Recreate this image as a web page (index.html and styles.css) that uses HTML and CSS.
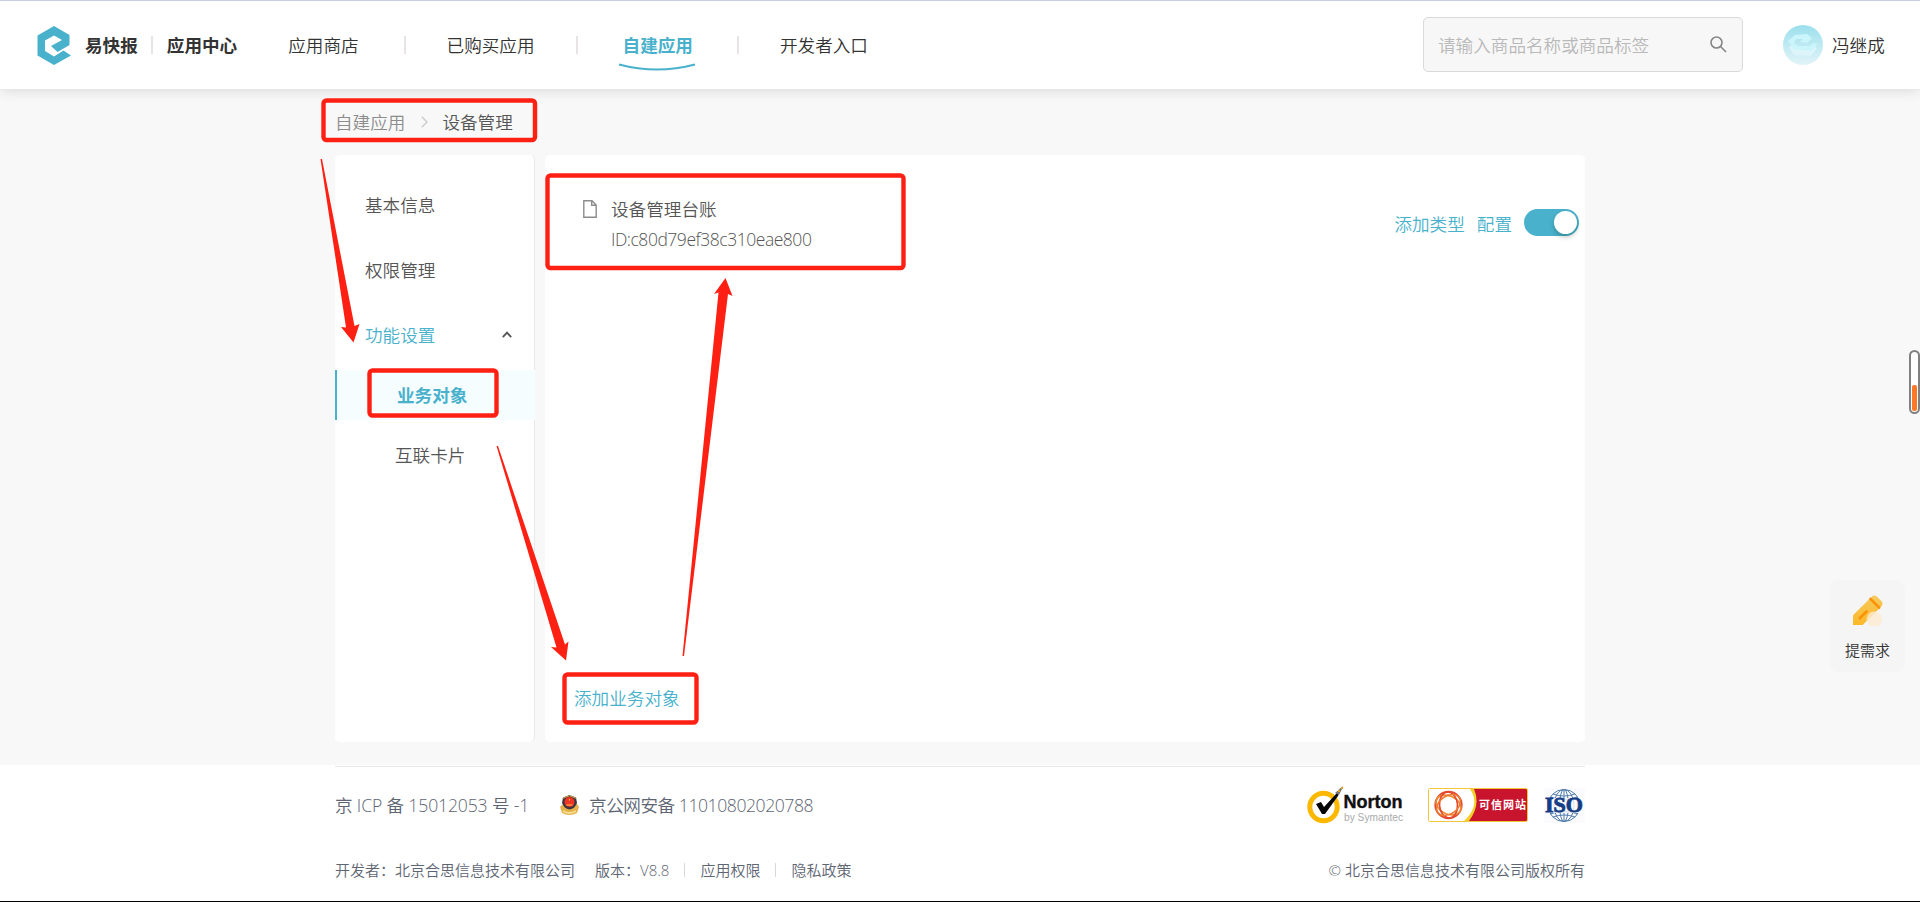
FILE: index.html
```html
<!DOCTYPE html>
<html lang="zh-CN">
<head>
<meta charset="utf-8">
<title>易快报 应用中心</title>
<link rel="stylesheet" href="styles.css">
</head>
<body>
<header class="topbar">
  <svg class="logo" viewBox="0 0 34 39"><path fill="#49b1cc" d="M17 0 32.500 9V19L20.500 26 14 20 25 14 17 9.500 8 14.500V25L17 30.500 26.500 24.500 34 29.500 17 39 .500 29.500V9.500Z"/></svg>
  <strong class="brand">易快报</strong>
  <i class="sep"></i>
  <strong class="center-name">应用中心</strong>
  <nav class="nav">
    <a>应用商店</a><i class="sep"></i><a>已购买应用</a><i class="sep"></i>
    <a class="current">自建应用<svg class="swoosh" viewBox="0 0 78 8"><path d="M1 1.500Q39 11.500 77 1.500" fill="none" stroke="#49b1cc" stroke-width="2"/></svg></a><i class="sep"></i><a>开发者入口</a>
  </nav>
  <div class="search"><span>请输入商品名称或商品标签</span>
    <svg class="lens" viewBox="0 0 17 17" fill="none" stroke="#858585" stroke-width="1.600"><circle cx="6.500" cy="6.500" r="5.500"/><path d="M10.500 10.500 16 16"/></svg>
  </div>
  <div class="user">
    <svg class="avatar" viewBox="0 0 40 40"><defs><linearGradient id="sky" x2="0" y2="1"><stop stop-color="#9adfec"/><stop offset="1" stop-color="#e2f4f8"/></linearGradient></defs><circle cx="20" cy="20" r="20" fill="url(#sky)"/><path d="M6 22 9 20 12 24 26 25 31 21 34 23 28 31 11 30Z" fill="#dff6fa" opacity=".85"/><path d="M5 16 12 10 24 9 29 13 24 18 17 17 20 14 13 14 11 18 15 21 27 21 30 18 35 19 28 26 11 24Z" fill="#c9f5fb"/></svg>
    <span>冯继成</span>
  </div>
</header>

<main class="page">
  <div class="crumbs"><span class="crumb-parent">自建应用</span><svg class="crumb-arrow" viewBox="0 0 7 12"><path d="M.8.8 6 6 .8 11.200" fill="none" stroke="#c9c9c9" stroke-width="1.300"/></svg><span>设备管理</span></div>
  <div class="columns">
    <aside class="side">
      <a class="item">基本信息</a>
      <a class="item">权限管理</a>
      <a class="item open">功能设置<svg class="chev" viewBox="0 0 10 7"><path d="M.8 6.200 5 1.600 9.200 6.200" fill="none" stroke="#555" stroke-width="1.800"/></svg></a>
      <a class="sub active">业务对象</a>
      <a class="sub">互联卡片</a>
    </aside>
    <section class="panel">
      <div class="record">
        <svg class="doc" viewBox="0 0 14 18" fill="none" stroke="#8c8c8c" stroke-width="1.400"><path d="M.8.8H9L13.200 5V17.200H.8ZM8.700.8V5.200H13.200"/></svg>
        <div class="record-text"><div>设备管理台账</div><div class="latin">ID:c80d79ef38c310eae800</div></div>
        <div class="actions"><a>添加类型</a><a>配置</a><span class="toggle"><i></i></span></div>
      </div>
      <a class="add">添加业务对象</a>
    </section>
  </div>
</main>

<footer class="footer">
  <div class="foot-inner">
    <div class="foot-row licenses">
      <span class="icp">京 ICP 备 15012053 号 -1</span>
      <svg class="police" viewBox="0 0 19 20"><path d="M2 10 0 12 2 18Q9.500 22 17 18L19 12 17 9Z" fill="#e4b14b"/><path d="M3 16Q9.500 20 16 16" fill="none" stroke="#f8df93" stroke-width="2"/><path d="M9.500 0 16 2.500 17 8Q15 13.500 9.500 14.500 4 13.500 2 8L3 2.500Z" fill="#3d3440"/><path d="M2.500 3.500 9.500.700 16.500 3.500" fill="none" stroke="#dfab4e"/><circle cx="9.500" cy="7" r="5" fill="#ee3423"/><path d="M6.500 10H12.500M9.500 4V5.500" stroke="#ffc446" stroke-width="1"/></svg>
      <span class="gongan">京公网安备 11010802020788</span>
      <div class="seals">
        <svg class="norton" viewBox="0 0 98 38"><circle cx="16.500" cy="21" r="13.700" fill="none" stroke="#fbb800" stroke-width="5"/><path d="M9 18 14 16 17 21 29 8 34 2 31 10 18 28H15Z" fill="#050505"/><path d="M28 7 36 0 35 3 32 9Z" fill="#777"/><path d="M31 4h2v2h-2zM34 1h2v2h-2z" fill="#e2a21c"/><text x="36.500" y="22" class="norton-name" textLength="59" lengthAdjust="spacingAndGlyphs">Norton</text><text x="37" y="34.500" class="norton-by" textLength="59" lengthAdjust="spacingAndGlyphs">by Symantec</text></svg>
        <svg class="trust" viewBox="0 0 100 34"><rect x=".5" y=".5" width="99" height="33" rx="1" fill="#fff" stroke="#f4c63b"/><path d="M42 1Q53 17 36 33H43Q54 17 46 1Z" fill="#f6cf29"/><path d="M46 1H98Q99 1 99 2V32Q99 33 98 33H41Q53 17 46 1Z" fill="#c8152d"/><g fill="none" stroke="#e2492e" stroke-width="1.700"><circle cx="20.500" cy="17" r="13.300"/><ellipse cx="20.500" cy="17" rx="13" ry="9" transform="rotate(25 20.500 17)" stroke="#f08b34"/><ellipse cx="20.500" cy="17" rx="13" ry="9" transform="rotate(85 20.500 17)"/><ellipse cx="20.500" cy="17" rx="13" ry="9" transform="rotate(145 20.500 17)" stroke="#ef7931"/></g><circle cx="20.500" cy="17" r="7" fill="#fff"/><text x="51" y="21" class="trust-name" textLength="47">可信网站</text></svg>
        <svg class="iso" viewBox="0 0 41 35"><rect width="41" height="35" fill="#fbfbfd"/><g fill="none" stroke="#527eac" stroke-width="1"><circle cx="20" cy="17.500" r="16"/><ellipse cx="20" cy="17.500" rx="10" ry="16"/><ellipse cx="20" cy="17.500" rx="4.500" ry="16"/><path d="M20 1V34M9 6Q20 10 31 6M6 9Q20 14 34 9M6 26Q20 21 34 26M9 29Q20 25 31 29"/></g><path d="M2 10H38V25H2Z" fill="#fbfbfd" opacity=".8"/><text x="1" y="24" class="iso-name" textLength="38" lengthAdjust="spacingAndGlyphs">ISO</text></svg>
      </div>
    </div>
    <div class="foot-row legal">
      <span class="dev">开发者：北京合思信息技术有限公司</span><span class="ver">版本：V8.8</span><i></i><span>应用权限</span><i></i><span>隐私政策</span><span class="copy">© 北京合思信息技术有限公司版权所有</span>
    </div>
  </div>
</footer>

<div class="gauge"><i></i></div>
<div class="request">
  <svg class="pen" viewBox="0 0 32 32"><defs><linearGradient id="gold" x2="0" y2="1"><stop stop-color="#f7c95d"/><stop offset="1" stop-color="#fbb829"/></linearGradient></defs><path d="M1 21 20 2Q23-1 26 2L30 6Q33 9 30 12L11 31H1Z" fill="url(#gold)"/><path d="M19 4 28 13M8 24 15 17" stroke="#fb9206" stroke-width="2.700" stroke-linecap="round"/><circle cx="23" cy="25" r="8" fill="#fcebd0" opacity=".8"/></svg>
  <span>提需求</span>
</div>

<svg class="marks" viewBox="0 0 1920 902">
  <g fill="none" stroke="#ff2014" stroke-width="4.400">
    <rect x="323.500" y="100.500" width="211.500" height="39.500" rx="3"/>
    <rect x="369.500" y="370.500" width="127" height="45" rx="3"/>
    <rect x="547.500" y="175.500" width="356" height="92.500" rx="3"/>
    <rect x="564.500" y="674.500" width="132" height="48" rx="3"/>
  </g>
  <g fill="#ff2014">
    <path d="M320.500 159H322L354.500 326 359.500 324 353.500 342.500 341 327 346 327.500Z"/>
    <path d="M496.500 446H498L565 644.500 568.500 641.500 566 660.500 551 647 556.500 647.500Z"/>
    <path d="M682.500 656H684L728 294 732.500 296 725.500 278 714 294 718.500 292.500Z"/>
  </g>
</svg>
</body>
</html>
```
FILE: styles.css
```css
* { box-sizing: border-box; }
body {
  margin: 0;
  height: 902px;
  overflow: hidden;
  display: flex;
  flex-direction: column;
  background: #f8f8f8;
  border-bottom: 1px solid #000;
  font: 350 17.6px/30px "Noto Sans CJK SC", sans-serif;
  color: #333;
  white-space: nowrap;
}
svg { display: block; flex: none; }
.topbar {
  flex: none;
  height: 89px;
  display: flex;
  align-items: center;
  padding: 0 34px 0 37px;
  border-top: 1px solid #c5d0e6;
  background: #fff;
  box-shadow: 0 2px 12px rgba(0, 0, 0, .12);
}
.logo { width: 34px; height: 39px; }
.brand { margin-left: 14px; font-weight: 700; }
.center-name { font-weight: 700; }
.sep { width: 2px; height: 18px; background: #e8e4e4; }
.brand + .sep { margin: 0 14px 0 13px; }
.nav { display: flex; align-items: center; margin-left: 51px; }
.nav .sep { margin: 0 41px 0 45px; }
.nav .current { color: #49b1cc; font-weight: 700; position: relative; }
.nav .current + .sep { margin-left: 44px; }
.nav .sep:has(+ .current) { margin-left: 41px; margin-right: 45px; }
.swoosh { position: absolute; left: -5px; top: 33px; width: 78px; height: 8px; }
.search {
  margin: -1px 0 0 auto;
  width: 320px;
  height: 55px;
  display: flex;
  align-items: center;
  justify-content: space-between;
  padding: 0 15px 0 14px;
  border: 1px solid #d9d9d9;
  border-radius: 5px;
  background: #f7f7f7;
  color: #b9b9b9;
}
.lens { width: 17px; height: 17px; }
.user { display: flex; align-items: center; gap: 9px; margin-left: 40px; }
.user span { width: 54px; }
.avatar { width: 40px; height: 40px; }
.page { width: 1250px; height: 676px; margin: 0 auto; flex: none; }
.crumbs { height: 66px; display: flex; align-items: center; color: #555; }
.crumb-parent { color: #8c8c8c; }
.crumb-arrow { width: 7px; height: 12px; margin: 0 14px 0 16px; }
.columns { display: flex; gap: 10px; height: 587px; }
.side {
  width: 200px;
  padding-top: 17px;
  border-radius: 5px;
  background: #fff;
  border-right: 1px solid #e8e8e8;
  color: #555;
}
.item { display: flex; align-items: center; height: 65px; padding: 0 22px 0 30px; }
.open { color: #49b1cc; justify-content: space-between; }
.chev { width: 10px; height: 7px; }
.sub { display: flex; align-items: center; height: 50px; margin-bottom: 10px; padding-left: 60px; }
.item + .sub { margin-top: 3px; }
.active {
  margin-right: -1px;
  padding-left: 60px;
  border-left: 2px solid #49b1cc;
  background: #f5fdff;
  color: #49b1cc;
  font-weight: 700;
}
.panel {
  width: 1040px;
  padding: 39px 6px 29px 38px;
  display: flex;
  flex-direction: column;
  justify-content: space-between;
  border-radius: 5px;
  background: #fff;
}
.record { display: flex; color: #555; }
.doc { width: 14px; height: 18px; margin: 6px 14px 0 0; }
.latin { font-family: "Open Sans", "Noto Sans CJK SC", sans-serif; font-size: 17.5px; letter-spacing: -.47px; }
.actions { display: flex; align-items: center; gap: 12px; height: 30px; margin: 15px 0 0 auto; color: #49b1cc; }
.toggle {
  width: 55px;
  height: 27px;
  display: flex;
  justify-content: flex-end;
  padding: 2px;
  margin-top: -3px;
  border-radius: 14px;
  background: #49b1cc;
}
.toggle i { width: 23px; height: 23px; border-radius: 50%; background: #fff; box-shadow: 0 3px 5px rgba(0, 35, 11, .25); }
.add { color: #49b1cc; margin-left: -9px; }
.footer { flex: 1; background: #fff; }
.foot-inner { width: 1250px; margin: 1px auto 0; border-top: 1px solid #e8e8e8; color: #5d6573; }
.foot-row { display: flex; align-items: center; height: 76px; font-family: "Open Sans", "Noto Sans CJK SC", sans-serif; }
.icp { width: 225px; letter-spacing: -.15px; }
.police { width: 19px; height: 20px; margin-right: 10px; }
.gongan { letter-spacing: -.45px; }
.seals { display: flex; align-items: center; margin-left: auto; }
.norton { width: 98px; height: 38px; }
.norton-name { font: 700 18.5px "Liberation Sans", sans-serif; fill: #111; stroke: #111; stroke-width: .4; }
.norton-by { font: 400 10px "Liberation Sans", sans-serif; fill: #aaa; }
.trust { width: 100px; height: 34px; margin: 0 16px 0 23px; }
.trust-name { font: 700 11px "Noto Sans CJK SC", sans-serif; fill: #fff; }
.iso { width: 41px; height: 35px; }
.iso-name { font: 700 20px "Liberation Serif", serif; fill: #153c85; stroke: #153c85; stroke-width: .8; }
.legal { height: 54px; font-size: 15px; }
.ver { margin-left: 20px; }
.legal i { width: 1px; height: 14px; background: #d8d8d8; margin: 0 15px; }
.copy { margin-left: auto; }
.gauge {
  position: absolute;
  left: 1909px;
  top: 350px;
  width: 11px;
  height: 64px;
  display: flex;
  align-items: flex-end;
  padding: 1px;
  border: 2px solid #808080;
  border-radius: 6px;
  background: #fff;
}
.gauge i { width: 5px; height: 26px; border-radius: 2px; background: #ff7828; }
.request {
  position: absolute;
  left: 1830px;
  top: 580px;
  width: 75px;
  height: 92px;
  display: flex;
  flex-direction: column;
  align-items: center;
  padding-top: 15px;
  border-radius: 8px;
  background: #f5f5f5;
  font-size: 15px;
}
.pen { width: 31px; height: 31px; margin-bottom: 9px; }
.marks { position: absolute; left: 0; top: 0; width: 1920px; height: 902px; pointer-events: none; }
```
